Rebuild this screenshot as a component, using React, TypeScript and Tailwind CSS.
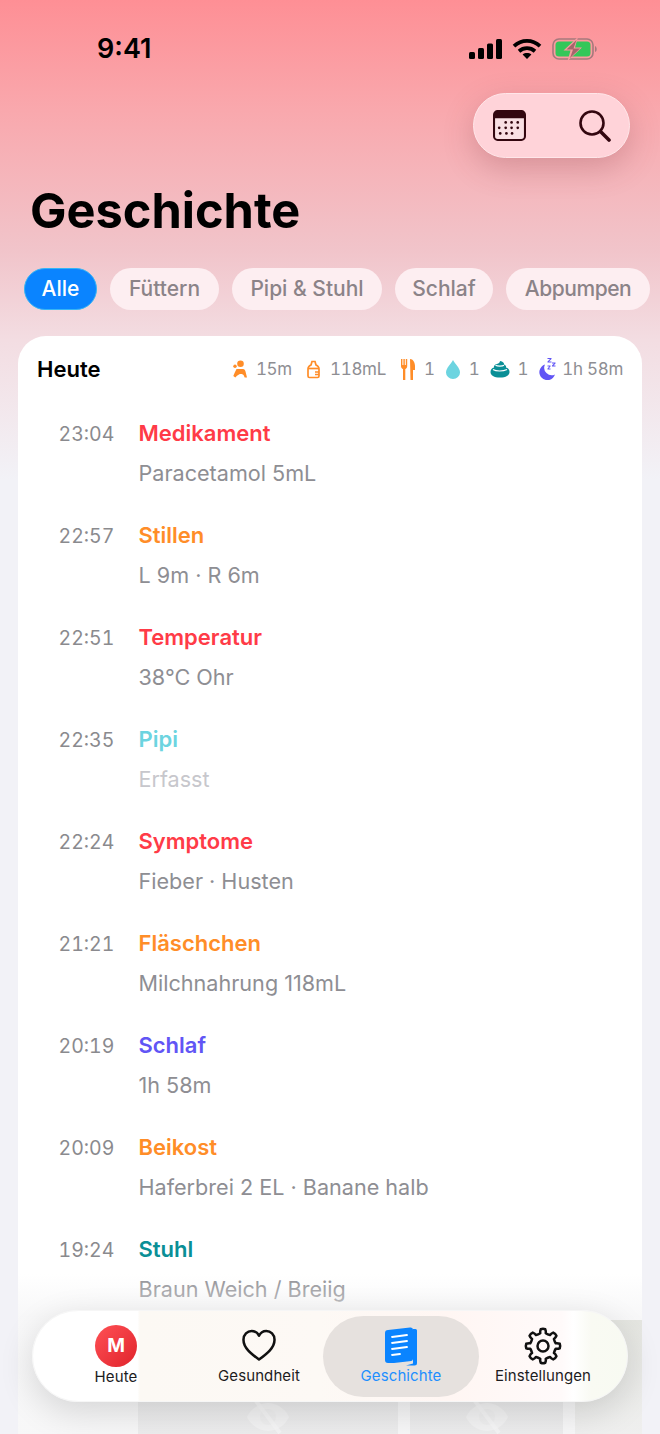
import React from "react";

const entries = [
  ["23:04", "Medikament", "text-[#ff3b47]", "Paracetamol 5mL", "text-[#8e8e93]"],
  ["22:57", "Stillen", "text-[#ff8d28]", "L 9m · R 6m", "text-[#8e8e93]"],
  ["22:51", "Temperatur", "text-[#ff3b47]", "38°C Ohr", "text-[#8e8e93]"],
  ["22:35", "Pipi", "text-[#6cd4e0]", "Erfasst", "text-[#c7c7cc]"],
  ["22:24", "Symptome", "text-[#ff3b47]", "Fieber · Husten", "text-[#8e8e93]"],
  ["21:21", "Fläschchen", "text-[#ff8d28]", "Milchnahrung 118mL", "text-[#8e8e93]"],
  ["20:19", "Schlaf", "text-[#6155f5]", "1h 58m", "text-[#8e8e93]"],
  ["20:09", "Beikost", "text-[#ff8d28]", "Haferbrei 2 EL · Banane halb", "text-[#8e8e93]"],
  ["19:24", "Stuhl", "text-[#0a8f96]", "Braun Weich / Breiig", "text-[#8e8e93]"],
];

const chips = [
  ["Füttern", "w-[109px]"],
  ["Pipi & Stuhl", "w-[150px]"],
  ["Schlaf", "w-[98px]"],
  ["Abpumpen", "w-[144px] tracking-[-0.45px]"],
];

function gearPath() {
  const teeth = 8;
  const cx = 19;
  const cy = 19;
  const pts: string[] = [];
  for (let i = 0; i < teeth; i++) {
    const a = (i / teeth) * Math.PI * 2 - Math.PI / 2;
    const s = (Math.PI * 2) / teeth;
    const p = (r: number, t: number) =>
      `${(cx + r * Math.cos(a + t * s)).toFixed(2)} ${(cy + r * Math.sin(a + t * s)).toFixed(2)}`;
    pts.push(`${i === 0 ? "M" : "L"}${p(13, -0.27)}`);
    pts.push(`Q${p(15, -0.27)} ${p(16.9, -0.17)}`);
    pts.push(`Q${p(17.6, 0)} ${p(16.9, 0.17)}`);
    pts.push(`Q${p(15, 0.27)} ${p(13, 0.27)}`);
    pts.push(`Q${p(12.4, 0.5)} ${p(13, 0.73)}`);
  }
  return pts.join(" ") + "Z";
}

function EyeOff({ className }: { className: string }) {
  return (
    <svg viewBox="0 0 44 34" className={className} fill="#ffffff">
      <path d="M22 3C11 3 3 12 1 17c2 5 10 14 21 14s19-9 21-14C41 12 33 3 22 3z" opacity="0.6" />
      <circle cx="22" cy="17" r="8" fill="#d9d9d9" opacity="0.5" />
      <path d="M10 1l24 32" stroke="#ffffff" strokeOpacity="0.7" strokeWidth="4" />
    </svg>
  );
}

function Stat({ icon, label, gap }: { icon: React.ReactNode; label: string; gap: string }) {
  return (
    <div className={`flex items-center ${gap}`}>
      {icon}
      <span className="text-[17px] leading-none tracking-[-0.3px] tabular-nums text-[#8e8e93]">{label}</span>
    </div>
  );
}

export default function App() {
  return (
    <div className="relative h-[1434px] w-[660px] overflow-hidden bg-[linear-gradient(180deg,#fe8f95_0px,#f9a8ad_110px,#f1c4ca_250px,#f3dde2_340px,#f2f2f7_480px)] font-['Inter','Liberation_Sans',sans-serif]">
      <div className="flex h-[93px] items-start justify-between pl-[97px] pr-[62px] pt-[32px]">
        <span className="text-[27px] font-semibold leading-[34px] text-black">9:41</span>
        <div className="flex items-center gap-[10px] pt-[6px]">
          <svg width="34" height="22" viewBox="0 0 34 22" fill="#000">
            <rect x="1" y="14" width="6" height="7" rx="1.5" />
            <rect x="10" y="10" width="6" height="11" rx="1.5" />
            <rect x="19" y="5.5" width="6" height="15.5" rx="1.5" />
            <rect x="28" y="1" width="6" height="20" rx="1.5" />
          </svg>
          <svg width="30" height="22" viewBox="0 0 30 22" fill="none" stroke="#000" strokeWidth="3.8">
            <path d="M2 8.2C9.5 1.2 20.5 1.2 28 8.2" />
            <path d="M7 13.2c4.6-4 11.4-4 16 0" />
            <path d="M15 21l-4.4-4.6c2.5-1.8 6.3-1.8 8.8 0z" fill="#000" stroke="none" />
          </svg>
          <svg width="46" height="22" viewBox="0 0 46 22" fill="none">
            <rect x="1" y="1" width="40" height="20" rx="6" stroke="#a5797c" strokeWidth="1.6" />
            <rect x="3.5" y="3.5" width="35" height="15" rx="3.5" fill="#34c759" />
            <path d="M43 8c2 .5 2.5 5.5 0 6z" fill="#a5797c" />
            <path d="M26 -1L11.500 12.500h7L15.500 23l14.500-13.500h-7z" fill="#fb9aa0" />
            <path d="M24.500 2L14.500 11.500h6.500L18 20l10-9.500h-6.500z" fill="#a5666c" />
          </svg>
        </div>
      </div>

      <div className="flex justify-end pr-[30px]">
        <div className="flex h-[65px] w-[157px] items-center justify-between rounded-full border border-[#ffe6e9] bg-[#ffd3d9] pl-[19px] pr-[18px] shadow-[0_10px_30px_rgba(120,50,60,0.25)]">
          <svg width="33" height="31" viewBox="0 0 32 30">
            <rect x="1" y="1" width="30" height="28" rx="3.5" fill="#f9dfe3" stroke="#33060f" strokeWidth="2" />
            <path d="M1 4.500a3.500 3.500 0 0 1 3.500-3.500h23a3.500 3.500 0 0 1 3.500 3.500V8H1z" fill="#33060f" />
            {[
              [12.3, 12], [18, 12], [24, 12],
              [6, 17.3], [12.3, 17.3], [18, 17.3], [24, 17.3],
              [7, 22.7], [13, 22.7], [18.500, 22.7],
            ].map(([x, y]) => (
              <circle key={`${x}-${y}`} cx={x} cy={y} r="1.3" fill="#33060f" />
            ))}
          </svg>
          <svg width="33" height="33" viewBox="0 0 33 33" fill="none" stroke="#33060f">
            <circle cx="14" cy="14" r="11.5" strokeWidth="2.6" />
            <path d="M22.5 22.5L31 31" strokeWidth="3.6" strokeLinecap="round" />
          </svg>
        </div>
      </div>

      <h1 className="pl-[30px] pt-[24px] text-[48.7px] font-bold leading-[58px] text-black">Geschichte</h1>

      <div className="flex gap-[13px] pl-[24px] pt-[28px] whitespace-nowrap">
        <div className="flex h-[42px] w-[73px] items-center justify-center rounded-full border border-[#35b5f5] bg-[#0a84ff] text-[21px] font-medium text-white">Alle</div>
        {chips.map(([c, w]) => (
          <div key={c} className={`flex h-[42px] items-center justify-center rounded-full bg-[#fdeef1] text-[21px] font-medium text-[#8b8388] ${w}`}>{c}</div>
        ))}
      </div>

      <div className="absolute left-[18px] top-[336px] h-[1098px] w-[624px] rounded-t-[28px] bg-white">
        <div className="flex h-[66px] items-center justify-between pl-[19px] pr-[19px]">
          <span className="text-[22px] font-semibold text-black">Heute</span>
          <div className="flex items-center">
            <Stat label="15m" gap="gap-[9px]" icon={
              <svg width="14" height="18" viewBox="0 0 14 18" fill="#ff8d28">
                <circle cx="7.500" cy="3.700" r="3.300" />
                <circle cx="2" cy="6.300" r="1.700" />
                <path d="M3.500 9h6.500c1.500 0 2 1 2.500 2.500L14 17.500h-2.300l-.7-1.500c-.5-2-3.500-2.500-5-1.500l-2 1.300L2.300 17.500.300 16c1-2.500 2.200-5 3.200-7z" />
              </svg>
            } />
            <div className="w-[15px]" />
            <Stat label="118mL" gap="gap-[10px]" icon={
              <svg width="13" height="19" viewBox="0 0 13 19" fill="none" stroke="#ff8d28" strokeWidth="1.700">
                <path d="M5 1.500h3l1 3.500c2 .8 3 2 3 4v7a1.500 1.500 0 0 1-1.500 1.500h-8A1.500 1.500 0 0 1 1 16V9c0-2 1-3.200 3-4z" />
                <path d="M1 8.500h11" />
                <path d="M8 12h4M8 14.500h4" strokeWidth="1.300" />
              </svg>
            } />
            <div className="w-[15px]" />
            <Stat label="1" gap="gap-[9px]" icon={
              <svg width="14" height="21" viewBox="0 0 14 21" fill="#ff8d28">
                <path d="M0 0h1.400v6h1V0h1.400v6h1V0H6.200v7.200c0 1.500-1 2.500-1.900 2.800V21H2V10C1 9.700 0 8.700 0 7.200z" />
                <path d="M9 0c3 0 5 3.500 5 7v4h-2v10H9.500z" />
              </svg>
            } />
            <div className="w-[11px]" />
            <Stat label="1" gap="gap-[9px]" icon={
              <svg width="14" height="19" viewBox="0 0 14 19" fill="#6cd4e0">
                <path d="M7 0c2 4 7 8 7 12.500A7 6.500 0 0 1 0 12.500C0 8 5 4 7 0z" />
              </svg>
            } />
            <div className="w-[11px]" />
            <Stat label="1" gap="gap-[7px]" icon={
              <svg width="20" height="17" viewBox="0 0 20 17" fill="#0a8f96">
                <path d="M10 0c3 .5 4.500 2 4 3.500 1.500.5 2.500 1.500 2 3 2 .6 3.500 2 3.500 4.500 0 3.500-3.500 5.500-9.500 5.500S.500 14.500.500 11c0-2.500 1.500-4 3.500-4.500-.5-1.500.5-3 3-3.500 1.500-.5 3-1.500 3-3z" />
                <path d="M3 8.500c3 2 10 2 14 0M5.500 4.200c2 1.200 7 1.200 8.500 0" stroke="#fff" strokeWidth="1.200" fill="none" />
              </svg>
            } />
            <div className="w-[10px]" />
            <Stat label="1h 58m" gap="gap-[6px]" icon={
              <svg width="18" height="22" viewBox="0 0 18 22" fill="#6155f5">
                <path d="M7 6.500A8 8 0 1 0 17 16.500a7.500 7.500 0 0 1-10-10z" />
                <path d="M9.500 0h4v1l-2.500 2.500h2.500v1h-4v-1L12 1H9.500zM14 4.500h3.500v1l-2 2h2v1H14v-1l2-2h-2zM9.500 7.500h3v1l-1.800 2h1.800v1h-3v-1l1.800-2H9.500z" />
              </svg>
            } />
          </div>
        </div>

        <div className="flex flex-col pt-[11px]">
          {entries.map(([time, title, color, sub, subColor]) => (
            <div key={time} className="flex h-[102px] pl-[40.500px]">
              <span className="w-[80px] pt-[1px] text-[19.500px] leading-[40px] tabular-nums text-[#8a8a8e]">{time}</span>
              <div className="flex flex-col">
                <span className={`text-[22px] font-semibold leading-[40px] ${color}`}>{title}</span>
                <span className={`text-[21.600px] leading-[40px] ${subColor}`}>{sub}</span>
              </div>
            </div>
          ))}
        </div>

        <div className="-mt-[11px] flex h-[116px] gap-[12px] pl-[120px]">
          <div className="flex h-full w-[260px] items-center justify-center bg-[#dcdcdc]">
            <EyeOff className="mt-[78px] h-[34px] w-[44px]" />
          </div>
          <div className="flex h-full w-[153px] items-center justify-center bg-[#dcdcdc]">
            <EyeOff className="mt-[78px] h-[34px] w-[44px]" />
          </div>
          <div className="h-full w-[67px] bg-[linear-gradient(180deg,#c6c9b9,#e4e4e0)]" />
        </div>
      </div>

      <div className="absolute bottom-0 left-[18px] h-[160px] w-[624px] bg-[linear-gradient(180deg,rgba(255,255,255,0)_0%,rgba(244,244,245,0.65)_26%,rgba(244,244,245,0.7)_100%)]" />

      <div className="absolute left-[32px] top-[1310px] flex h-[92px] w-[596px] items-center rounded-full border border-[#f6f6f6] bg-[linear-gradient(90deg,#ffffff_0%,#ffffff_17.600%,#fcf9f4_18%,#fdf9f5_48%,#fff6f3_70%,#fffafa_89%,#ffffff_91%,#f9faf3_94%,#f8faf2_100%)] pl-[12px] shadow-[0_10px_35px_rgba(0,0,0,0.14)]">
        <div className="flex w-[142px] flex-col items-center">
          <div className="flex h-[42px] w-[42px] items-center justify-center rounded-full bg-[linear-gradient(135deg,#ff5055,#e0242c)] text-[19px] font-bold text-white">M</div>
          <span className="text-[15px] leading-[20px] tracking-[0.1px] text-[#1c1c1e]">Heute</span>
        </div>
        <div className="flex w-[136px] flex-col items-center pl-[8px]">
          <svg className="mt-[3px]" width="36" height="33" viewBox="0 0 36 34" fill="none" stroke="#111" strokeWidth="2.600" strokeLinejoin="round">
            <path d="M18 31.500C10 25.500 2 19.500 2 11 2 5.500 6 2 10.500 2c3.500 0 6 1.800 7.500 5 1.500-3.200 4-5 7.500-5C30 2 34 5.500 34 11c0 8.500-8 14.500-16 20.500z" />
          </svg>
          <span className="mt-[4px] text-[15px] leading-[20px] tracking-[0.1px] text-[#1c1c1e]">Gesundheit</span>
        </div>
        <div className="flex h-[81px] w-[156px] flex-col items-center justify-center rounded-full bg-[#e6e1de]">
          <svg width="32" height="39" viewBox="0 0 32 39">
            <path d="M28 2h2.500a1.500 1.500 0 0 1 1.500 1.500V36a2.500 2.500 0 0 1-2.500 2.500H21l7-2z" fill="#0a84ff" />
            <path d="M3 3L25 .5A2.500 2.500 0 0 1 28 3v29a2 2 0 0 1-1.700 2L9 36 3 36a3 3 0 0 1-3-3V6a3 3 0 0 1 3-3z" fill="#0a84ff" />
            <path d="M7 10l15-2M7 16l15-2M7 22l15-2M7 28l8-1" stroke="#fff" strokeWidth="1.800" strokeLinecap="round" />
          </svg>
          <span className="text-[15px] leading-[20px] tracking-[0.1px] text-[#1f8fff]">Geschichte</span>
        </div>
        <div className="flex w-[128px] flex-col items-center">
          <svg className="mt-[1px]" width="38" height="38" viewBox="0 0 38 38" fill="none" stroke="#111" strokeWidth="2.500" strokeLinejoin="round">
            <path d={gearPath()} />
            <circle cx="19" cy="19" r="5.500" />
          </svg>
          <span className="mt-[1px] text-[15px] leading-[20px] tracking-[0.1px] text-[#1c1c1e]">Einstellungen</span>
        </div>
      </div>
    </div>
  );
}
